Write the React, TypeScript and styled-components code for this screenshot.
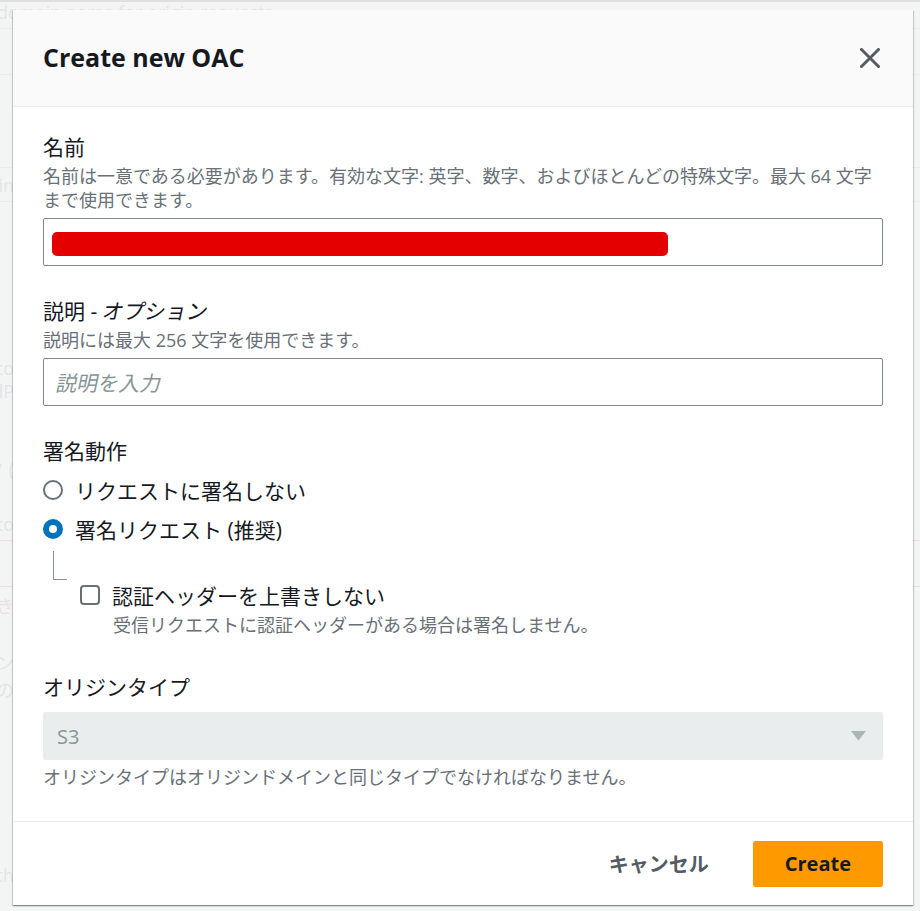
import React from "react";
import styled, { createGlobalStyle } from "styled-components";

const GlobalStyle = createGlobalStyle`
  html, body {
    margin: 0;
    padding: 0;
  }
  body {
    font-family: "Open Sans", "Noto Sans CJK JP", sans-serif;
    color: #16191f;
    background: #ffffff;
  }
  * {
    box-sizing: border-box;
  }
`;

const Page = styled.div`
  position: relative;
  width: 920px;
  height: 911px;
  overflow: hidden;
  background: #ffffff;
`;

const TopNav = styled.div`
  height: 2px;
  background: #232f3e;
`;

// faint page behind the modal backdrop
const BgRow = styled.div<{ $h: number; $line?: string }>`
  height: ${(p) => p.$h}px;
  display: flex;
  align-items: center;
  border-bottom: ${(p) => (p.$line ? `1px solid ${p.$line}` : "none")};
  font-size: 18px;
  white-space: nowrap;
  color: #16191f;
`;

const BgLead = styled.span`
  margin-left: -3px;
  color: #545b64;
`;

const BgTail = styled.div<{ $color?: string }>`
  width: 14px;
  overflow: hidden;
  display: flex;
  justify-content: flex-end;
  color: ${(p) => p.$color || "#545b64"};
`;

const Overlay = styled.div`
  position: absolute;
  inset: 0;
  background: rgba(242, 243, 243, 0.9);
  padding: 10px 0 0 13px;
`;

const Modal = styled.div`
  width: 900px;
  height: 895px;
  background: #ffffff;
  display: flex;
  flex-direction: column;
  box-shadow: 0 1px 1px 0 rgba(0, 28, 36, 0.3), 1px 1px 1px 0 rgba(0, 28, 36, 0.15),
    -1px 1px 1px 0 rgba(0, 28, 36, 0.15);
`;

const Header = styled.div`
  height: 97px;
  flex: none;
  display: flex;
  align-items: center;
  justify-content: space-between;
  padding: 0 33px 0 30px;
  background: #fafafa;
  border-bottom: 1px solid #eaeded;
`;

const Title = styled.h2`
  margin: 0 0 3px;
  font-size: 25px;
  font-weight: 700;
  line-height: 34px;
  color: #16191f;
`;

const CloseButton = styled.button`
  width: 20px;
  height: 20px;
  padding: 0;
  border: none;
  background: none;
  display: flex;
  cursor: pointer;
`;

const Body = styled.div`
  flex: 1;
  display: flex;
  flex-direction: column;
  padding: 25px 30px 0;
`;

const Field = styled.div<{ $gap?: number }>`
  display: flex;
  flex-direction: column;
  margin-bottom: ${(p) => (p.$gap ?? 30)}px;
`;

const Label = styled.div`
  font-size: 21px;
  line-height: 30px;
  color: #16191f;
`;

const Optional = styled.span`
  display: inline-block;
  transform: skewX(-12deg);
`;

const Desc = styled.div<{ $top?: number; $indent?: number }>`
  margin-top: ${(p) => p.$top ?? 2}px;
  margin-left: ${(p) => p.$indent ?? 0}px;
  font-size: 18px;
  line-height: 24px;
  color: #687078;
`;

const InputBox = styled.div`
  margin-top: 6px;
  height: 48px;
  display: flex;
  align-items: center;
  padding: 0 8px;
  border: 1px solid #7d8891;
  border-radius: 2px;
  background: #ffffff;
`;

const Redaction = styled.span`
  width: 616px;
  height: 24px;
  margin-top: 3px;
  border-radius: 5px;
  background: #e40000;
`;

const Placeholder = styled.span`
  display: inline-block;
  padding-left: 5px;
  font-size: 21px;
  transform: skewX(-12deg);
  color: #879596;
`;

const RadioList = styled.div`
  margin-top: 9px;
  display: flex;
  flex-direction: column;
  gap: 9px;
`;

const OptionRow = styled.label<{ $indent?: number; $gap?: number }>`
  height: 30px;
  display: flex;
  align-items: center;
  gap: ${(p) => p.$gap ?? 12}px;
  margin-left: ${(p) => p.$indent ?? 0}px;
  font-size: 21px;
  color: #16191f;
`;

const Connector = styled.div`
  margin: 7px 0 0 10px;
  width: 14px;
  height: 29px;
  border-left: 1px solid #879596;
  border-bottom: 1px solid #879596;
`;

const SelectBox = styled.div`
  margin-top: 10px;
  height: 48px;
  display: flex;
  align-items: center;
  justify-content: space-between;
  padding: 0 17px 0 14px;
  border-radius: 2px;
  background: #eaeded;
  font-size: 20px;
  color: #879596;
`;

const Footer = styled.div`
  height: 84px;
  flex: none;
  display: flex;
  align-items: center;
  justify-content: flex-end;
  gap: 14px;
  padding: 0 30px;
  border-top: 1px solid #eaeded;
`;

const Button = styled.button<{ $primary?: boolean }>`
  height: 46px;
  padding: 0 ${(p) => (p.$primary ? 32 : 30)}px;
  border: none;
  border-radius: 2px;
  font-family: "Open Sans", "Noto Sans CJK JP", sans-serif;
  font-size: 20px;
  font-weight: 700;
  color: ${(p) => (p.$primary ? "#16191f" : "#545b64")};
  background: ${(p) => (p.$primary ? "#ff9900" : "transparent")};
  cursor: pointer;
`;

const Radio = ({ checked }: { checked?: boolean }) => (
  <svg width="20" height="20" viewBox="0 0 20 20">
    {checked ? (
      <>
        <circle cx="10" cy="10" r="10" fill="#0073bb" />
        <circle cx="10" cy="10" r="4" fill="#ffffff" />
      </>
    ) : (
      <circle cx="10" cy="10" r="9" fill="#ffffff" stroke="#687078" strokeWidth="2" />
    )}
  </svg>
);

const Checkbox = () => (
  <svg width="20" height="20" viewBox="0 0 20 20">
    <rect x="1" y="1" width="18" height="18" rx="3" fill="#ffffff" stroke="#687078" strokeWidth="2" />
  </svg>
);

const bgRows: { h: number; line?: string; tail?: string; color?: string }[] = [
  { h: 7, line: "#aab7b8" },
  { h: 46, line: "#aab7b8" },
  { h: 93, line: "#aab7b8" },
  { h: 34, line: "#aab7b8", tail: "Origin domain" },
  { h: 154 },
  { h: 24, tail: "co" },
  { h: 22, tail: "dP" },
  { h: 54 },
  { h: 24, tail: "ク (" },
  { h: 32 },
  { h: 24, tail: "to" },
  { h: 5, line: "#d13212" },
  { h: 46, line: "#d13212" },
  { h: 36, tail: "書き", color: "#d13212" },
  { h: 27 },
  { h: 24, tail: "ン" },
  { h: 30, tail: "の" },
  { h: 159 },
  { h: 24, tail: "th" },
];

export default function App() {
  return (
    <Page>
      <GlobalStyle />
      <TopNav />
      <BgRow $h={20}>
        <BgLead>domain name for origin requests</BgLead>
      </BgRow>
      {bgRows.map((row, i) => (
        <BgRow key={i} $h={row.h} $line={row.line}>
          {row.tail ? <BgTail $color={row.color}>{row.tail}</BgTail> : null}
        </BgRow>
      ))}

      <Overlay>
        <Modal>
          <Header>
            <Title>Create new OAC</Title>
            <CloseButton aria-label="close">
              <svg width="20" height="20" viewBox="0 0 20 20">
                <path d="M1.5 1.5 L18.5 18.5 M18.5 1.5 L1.5 18.5" stroke="#545b64" strokeWidth="3" strokeLinecap="round" />
              </svg>
            </CloseButton>
          </Header>

          <Body>
            <Field>
              <Label>名前</Label>
              <Desc>
                名前は一意である必要があります。有効な文字: 英字、数字、およびほとんどの特殊文字。最大 64 文字まで使用できます。
              </Desc>
              <InputBox>
                <Redaction />
              </InputBox>
            </Field>

            <Field>
              <Label>
                説明 - <Optional>オプション</Optional>
              </Label>
              <Desc>説明には最大 256 文字を使用できます。</Desc>
              <InputBox>
                <Placeholder>説明を入力</Placeholder>
              </InputBox>
            </Field>

            <Field $gap={35}>
              <Label>署名動作</Label>
              <RadioList>
                <OptionRow>
                  <Radio />
                  リクエストに署名しない
                </OptionRow>
                <OptionRow>
                  <Radio checked />
                  署名リクエスト (推奨)
                </OptionRow>
              </RadioList>
              <Connector />
              <OptionRow $indent={37} $gap={12}>
                <Checkbox />
                認証ヘッダーを上書きしない
              </OptionRow>
              <Desc $top={3} $indent={70}>
                受信リクエストに認証ヘッダーがある場合は署名しません。
              </Desc>
            </Field>

            <Field $gap={0}>
              <Label>オリジンタイプ</Label>
              <SelectBox>
                <span>S3</span>
                <svg width="15" height="10" viewBox="0 0 15 10">
                  <path d="M0 0 L15 0 L7.5 9.5 Z" fill="#aab7b8" />
                </svg>
              </SelectBox>
              <Desc $top={5}>オリジンタイプはオリジンドメインと同じタイプでなければなりません。</Desc>
            </Field>
          </Body>

          <Footer>
            <Button>キャンセル</Button>
            <Button $primary>Create</Button>
          </Footer>
        </Modal>
      </Overlay>
    </Page>
  );
}
